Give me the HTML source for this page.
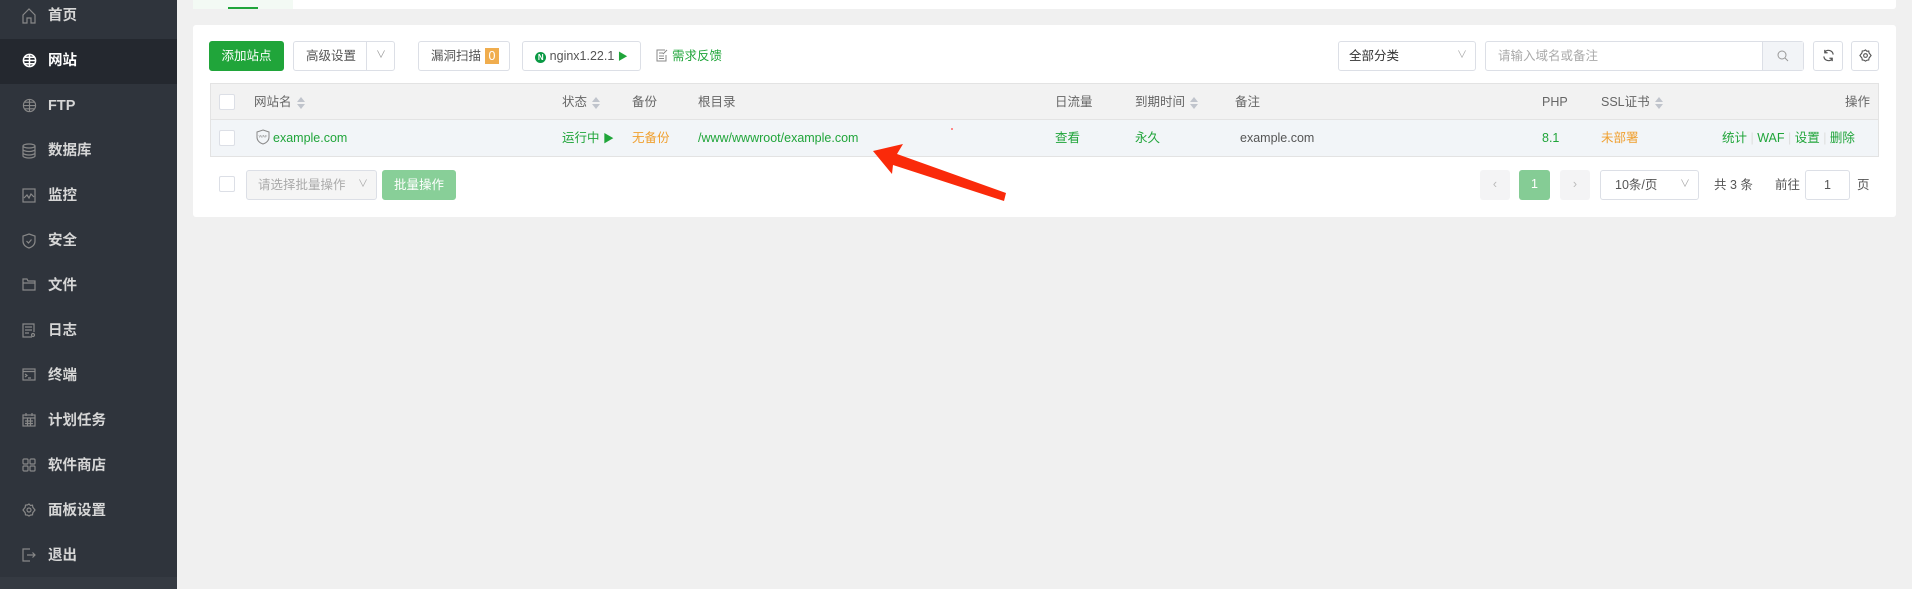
<!DOCTYPE html>
<html><head><meta charset="utf-8"><style>
*{box-sizing:border-box;margin:0;padding:0}
body{width:1912px;height:589px;overflow:hidden;background:#f0f0f0;font-family:"Liberation Sans","Noto Sans CJK SC",sans-serif;font-size:12.5px;color:#333;position:relative}
.abs{position:absolute}
#side{left:0;top:0;width:177px;height:589px;background:#2f343c}
.mi{position:absolute;left:0;width:177px;height:45px;line-height:45px;color:#d6d6d6;font-size:14.5px;font-weight:bold;padding-left:48px}
.mi svg{position:absolute;left:22px;top:14px}
.act{background:#24282f;color:#fff}
.btn{position:absolute;top:41px;height:30px;border:1px solid #dcdfe6;border-radius:3px;background:#fff;line-height:28px;text-align:center;color:#555}
.chk{position:absolute;width:16px;height:16px;border:1px solid #dcdfe6;background:#fff;border-radius:2px}
.th{position:absolute;top:84px;height:36px;line-height:36px;color:#666}
.td{position:absolute;top:120px;height:37px;line-height:37px}
.g{color:#20a53a}.o{color:#f0a030}
.sort{display:inline-block;vertical-align:middle;margin-left:5px;width:8px;height:12px;position:relative}
.sort:before{content:"";position:absolute;left:0;top:0;border:4px solid transparent;border-bottom:5px solid #c0c4cc;border-top:0}
.sort:after{content:"";position:absolute;left:0;top:7px;border:4px solid transparent;border-top:5px solid #c0c4cc;border-bottom:0}
</style></head><body>
<div id="side" class="abs">
<div class="mi" style="top:-6px"><svg width="14" height="16" viewBox="0 0 14 16" fill="none" stroke="#888" stroke-width="1.2"><path d="M1 7L7 1l6 6v8H9v-5H5v5H1z"/></svg>首页</div>
<div class="mi act" style="top:39px"><svg width="15" height="15" viewBox="0 0 16 16" fill="none" stroke="#fff" stroke-width="1.6"><circle cx="8" cy="8" r="6.5"/><path d="M1.5 8h13M8 1.5v13M3 4.5h10M3 11.5h10"/></svg>网站</div>
<div class="mi" style="top:84px"><svg width="15" height="15" viewBox="0 0 16 16" fill="none" stroke="#888" stroke-width="1.2"><circle cx="8" cy="8" r="6.5"/><path d="M1.5 8h13M8 1.5v13M3 4.5h10M3 11.5h10"/></svg>FTP</div>
<div class="mi" style="top:129px"><svg width="14" height="16" viewBox="0 0 14 16" fill="none" stroke="#888" stroke-width="1.2"><ellipse cx="7" cy="3" rx="6" ry="2"/><path d="M1 3v10c0 1 3 2 6 2s6-1 6-2V3M1 6.5c0 1 3 2 6 2s6-1 6-2M1 10c0 1 3 2 6 2s6-1 6-2"/></svg>数据库</div>
<div class="mi" style="top:174px"><svg width="14" height="15" viewBox="0 0 14 15" fill="none" stroke="#888" stroke-width="1.2"><rect x="1" y="1" width="12" height="13"/><path d="M2 10l3-3 2 3 2-4 3 3"/></svg>监控</div>
<div class="mi" style="top:219px"><svg width="14" height="16" viewBox="0 0 14 16" fill="none" stroke="#888" stroke-width="1.2"><path d="M7 1l6 2v5c0 4-3 6-6 7-3-1-6-3-6-7V3z"/><path d="M4.5 8l2 2 3-3.5"/></svg>安全</div>
<div class="mi" style="top:264px"><svg width="14" height="13" viewBox="0 0 14 13" fill="none" stroke="#888" stroke-width="1.2"><path d="M1 1h4l1 2h7v9H1zM1 5h12"/></svg>文件</div>
<div class="mi" style="top:309px"><svg width="14" height="15" viewBox="0 0 14 15" fill="none" stroke="#888" stroke-width="1.2"><path d="M10 14H1V1h11v8M3 4h7M3 7h7M3 10h4"/><circle cx="11" cy="12" r="1.5"/></svg>日志</div>
<div class="mi" style="top:354px"><svg width="14" height="13" viewBox="0 0 14 13" fill="none" stroke="#888" stroke-width="1.2"><rect x="1" y="1" width="12" height="11"/><path d="M1 3.5h12M3 6l2 1.5L3 9M6 10h3"/></svg>终端</div>
<div class="mi" style="top:399px"><svg width="14" height="14" viewBox="0 0 14 14" fill="none" stroke="#888" stroke-width="1.2"><rect x="1" y="2" width="12" height="11"/><path d="M1 5h12M4 0v3M10 0v3M3 8h8M3 10.5h8M5.5 5v8M8.5 5v8"/></svg>计划任务</div>
<div class="mi" style="top:444px"><svg width="14" height="14" viewBox="0 0 14 14" fill="none" stroke="#888" stroke-width="1.2"><rect x="1" y="1" width="5" height="5" rx="1"/><rect x="8" y="1" width="5" height="5" rx="1"/><rect x="1" y="8" width="5" height="5" rx="1"/><rect x="8" y="8" width="5" height="5" rx="1"/></svg>软件商店</div>
<div class="mi" style="top:489px"><svg width="14" height="14" viewBox="0 0 14 14" fill="none" stroke="#888" stroke-width="1.2"><circle cx="7" cy="7" r="2"/><path d="M7 1l1.5 1.5 2-.3.3 2L13 7l-2.2 2.8-.3 2-2 .3L7 13l-1.5-.9-2-.3-.3-2L1 7l2.2-2.8.3-2 2-.3z"/></svg>面板设置</div>
<div class="mi" style="top:534px"><svg width="14" height="14" viewBox="0 0 14 14" fill="none" stroke="#888" stroke-width="1.2"><path d="M8 1H1v12h7M5 7h8M10.5 4.5L13 7l-2.5 2.5"/></svg>退出</div>
<div class="abs" style="left:0;top:577px;width:177px;height:12px;background:#353a42"></div>
</div>

<div class="abs" style="left:193px;top:0;width:1703px;height:9px;background:#fff;border-radius:0 0 3px 3px"></div>
<div class="abs" style="left:193px;top:0;width:100px;height:9px;background:#f3faf4"></div>
<div class="abs" style="left:228px;top:7px;width:30px;height:2px;background:#20a53a"></div>

<div class="abs" style="left:193px;top:25px;width:1703px;height:192px;background:#fff;border-radius:3px"></div>

<div class="btn" style="left:209px;width:75px;background:#20a53a;border-color:#20a53a;color:#fff">添加站点</div>
<div class="btn" style="left:293px;width:102px;text-align:left;padding-left:12px">高级设置<span class="abs" style="left:72px;top:0;height:28px;border-left:1px solid #dcdfe6;width:29px;text-align:center;color:#999;font-size:10px">&#8744;</span></div>
<div class="btn" style="left:418px;width:92px;text-align:left;padding-left:12px">漏洞扫描<span class="abs" style="left:66px;top:6px;width:14px;height:16px;line-height:16px;background:#f0ad4e;color:#fff;text-align:center">0</span></div>
<div class="btn" style="left:522px;width:119px"><span style="display:inline-block;width:11px;height:11px;border-radius:50%;background:#0a9944;color:#fff;font-size:8px;line-height:11px;font-weight:bold;vertical-align:0px">N</span> nginx1.22.1 <span style="color:#20a53a;font-size:10px">&#9654;</span></div>
<div class="abs g" style="left:656px;top:41px;line-height:30px"><svg width="12" height="13" viewBox="0 0 12 13" fill="none" stroke="#888" style="vertical-align:-2px;margin-right:4px"><path d="M9 1H1v11h9V6M3 4h4M3 7h5M3 9.5h5M7 5l4-4"/></svg>需求反馈</div>

<div class="btn" style="left:1338px;width:138px;text-align:left;padding-left:10px;color:#333">全部分类<span class="abs" style="right:8px;color:#aaa;font-size:10px">&#8744;</span></div>
<div class="btn" style="left:1485px;width:319px;text-align:left;padding-left:12px;color:#aaa">请输入域名或备注<span class="abs" style="right:0;top:0;width:41px;height:28px;background:#f2f4f7;border-left:1px solid #dcdfe6;text-align:center"><svg width="12" height="12" viewBox="0 0 12 12" fill="none" stroke="#999" style="margin-top:8px"><circle cx="5" cy="5" r="4"/><path d="M8 8l3 3"/></svg></span></div>
<div class="btn" style="left:1813px;width:30px"><svg width="13" height="13" viewBox="0 0 14 14" fill="none" stroke="#555" stroke-width="1.3" style="margin-top:7px"><path d="M12 6A5 5 0 0 0 3 3.5M2 8a5 5 0 0 0 9 2.5M3 1v3h3M11 13v-3H8"/></svg></div>
<div class="btn" style="left:1851px;width:28px"><svg width="13" height="13" viewBox="0 0 14 14" fill="none" stroke="#555" stroke-width="1.2" style="margin-top:7px"><circle cx="7" cy="7" r="2"/><path d="M7 1l1.5 1.5 2-.3.3 2L13 7l-2.2 2.8-.3 2-2 .3L7 13l-1.5-.9-2-.3-.3-2L1 7l2.2-2.8.3-2 2-.3z"/></svg></div>

<div class="abs" style="left:210px;top:83px;width:1669px;height:74px;border:1px solid #e3e3e3"></div>
<div class="abs" style="left:211px;top:84px;width:1667px;height:36px;background:#f2f2f2;border-bottom:1px solid #e3e3e3"></div>
<div class="abs" style="left:211px;top:120px;width:1667px;height:36px;background:#f2f5f8"></div>
<div class="chk" style="left:219px;top:94px"></div>
<div class="chk" style="left:219px;top:130px"></div>
<div class="th" style="left:254px">网站名<span class="sort"></span></div>
<div class="th" style="left:562px">状态<span class="sort"></span></div>
<div class="th" style="left:632px">备份</div>
<div class="th" style="left:698px">根目录</div>
<div class="th" style="left:1055px">日流量</div>
<div class="th" style="left:1135px">到期时间<span class="sort"></span></div>
<div class="th" style="left:1235px">备注</div>
<div class="th" style="left:1542px">PHP</div>
<div class="th" style="left:1601px">SSL证书<span class="sort"></span></div>
<div class="th" style="left:1845px">操作</div>

<div class="td g" style="left:256px"><svg width="14" height="16" viewBox="0 0 14 16" fill="none" stroke="#888" stroke-width="1" style="vertical-align:-3px;margin-right:3px"><path d="M7 1l6 2v5c0 4-3 6-6 7-3-1-6-3-6-7V3z"/><text x="7" y="8.5" font-size="4" fill="#888" stroke="none" text-anchor="middle">WAF</text></svg>example.com</div>
<div class="td g" style="left:562px">运行中 <span style="font-size:11px">&#9654;</span></div>
<div class="td o" style="left:632px">无备份</div>
<div class="td g" style="left:698px">/www/wwwroot/example.com</div>
<div class="abs" style="left:951px;top:128px;width:2px;height:2px;background:#f88"></div>
<div class="td g" style="left:1055px">查看</div>
<div class="td g" style="left:1135px">永久</div>
<div class="td" style="left:1240px;color:#555">example.com</div>
<div class="td g" style="left:1542px">8.1</div>
<div class="td o" style="left:1601px">未部署</div>
<div class="td g" style="left:1722px">统计 <span style="color:#ddd">|</span> WAF <span style="color:#ddd">|</span> 设置 <span style="color:#ddd">|</span> 删除</div>

<svg class="abs" style="left:0;top:0" width="1912" height="589"><polygon points="873,151 903,144 897,154 1006,193 1004,201 893,165 892,174" fill="#fa2a0a"/></svg>

<div class="chk" style="left:219px;top:176px"></div>
<div class="btn" style="left:246px;top:170px;width:131px;background:#f5f5f5;color:#aaa;text-align:left;padding-left:11px">请选择批量操作<span class="abs" style="right:8px;font-size:10px">&#8744;</span></div>
<div class="btn" style="left:382px;top:170px;width:74px;background:#88cf98;border-color:#88cf98;color:#fff">批量操作</div>

<div class="btn" style="left:1480px;top:170px;width:30px;background:#f4f4f5;border:none;color:#bbb">&#8249;</div>
<div class="btn" style="left:1519px;top:170px;width:31px;background:#85cc95;border:none;color:#fff">1</div>
<div class="btn" style="left:1560px;top:170px;width:30px;background:#f4f4f5;border:none;color:#bbb">&#8250;</div>
<div class="btn" style="left:1600px;top:170px;width:99px;text-align:left;padding-left:14px;color:#555">10条/页<span class="abs" style="right:8px;color:#aaa;font-size:10px">&#8744;</span></div>
<div class="abs" style="left:1714px;top:170px;line-height:30px;color:#555">共 3 条</div>
<div class="abs" style="left:1775px;top:170px;line-height:30px;color:#555">前往</div>
<div class="btn" style="left:1805px;top:170px;width:45px;color:#555">1</div>
<div class="abs" style="left:1857px;top:170px;line-height:30px;color:#555">页</div>
</body></html>
